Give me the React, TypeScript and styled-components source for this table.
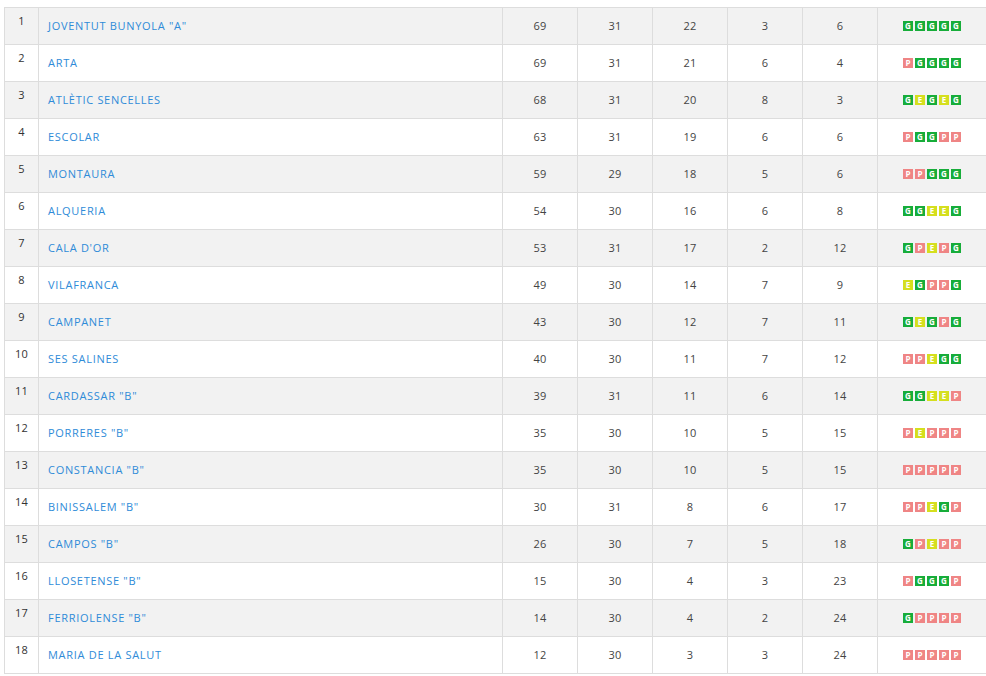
import { createGlobalStyle, styled } from "styled-components";

const GlobalStyle = createGlobalStyle`
  * {
    padding: 0;
    margin: 0;
    box-sizing: border-box;
  }
  body {
    background: #fff;
    font-family: "Open Sans", "Liberation Sans", sans-serif;
  }
`;

const color = {
  border: "#dddddd",
  stripe: "#f2f2f2",
  link: "#2f8bd8",
  text: "#444444",
  win: "#17ad3a",
  draw: "#d5df1e",
  loss: "#ef8585",
};

type Result = "G" | "E" | "P";

interface Team {
  pos: number;
  name: string;
  pts: number;
  pj: number;
  pg: number;
  pe: number;
  pp: number;
  form: string;
}

const teams: Team[] = [
  { pos: 1, name: 'JOVENTUT BUNYOLA "A"', pts: 69, pj: 31, pg: 22, pe: 3, pp: 6, form: "GGGGG" },
  { pos: 2, name: "ARTA", pts: 69, pj: 31, pg: 21, pe: 6, pp: 4, form: "PGGGG" },
  { pos: 3, name: "ATLÈTIC SENCELLES", pts: 68, pj: 31, pg: 20, pe: 8, pp: 3, form: "GEGEG" },
  { pos: 4, name: "ESCOLAR", pts: 63, pj: 31, pg: 19, pe: 6, pp: 6, form: "PGGPP" },
  { pos: 5, name: "MONTAURA", pts: 59, pj: 29, pg: 18, pe: 5, pp: 6, form: "PPGGG" },
  { pos: 6, name: "ALQUERIA", pts: 54, pj: 30, pg: 16, pe: 6, pp: 8, form: "GGEEG" },
  { pos: 7, name: "CALA D'OR", pts: 53, pj: 31, pg: 17, pe: 2, pp: 12, form: "GPEPG" },
  { pos: 8, name: "VILAFRANCA", pts: 49, pj: 30, pg: 14, pe: 7, pp: 9, form: "EGPPG" },
  { pos: 9, name: "CAMPANET", pts: 43, pj: 30, pg: 12, pe: 7, pp: 11, form: "GEGPG" },
  { pos: 10, name: "SES SALINES", pts: 40, pj: 30, pg: 11, pe: 7, pp: 12, form: "PPEGG" },
  { pos: 11, name: 'CARDASSAR "B"', pts: 39, pj: 31, pg: 11, pe: 6, pp: 14, form: "GGEEP" },
  { pos: 12, name: 'PORRERES "B"', pts: 35, pj: 30, pg: 10, pe: 5, pp: 15, form: "PEPPP" },
  { pos: 13, name: 'CONSTANCIA "B"', pts: 35, pj: 30, pg: 10, pe: 5, pp: 15, form: "PPPPP" },
  { pos: 14, name: 'BINISSALEM "B"', pts: 30, pj: 31, pg: 8, pe: 6, pp: 17, form: "PPEGP" },
  { pos: 15, name: 'CAMPOS "B"', pts: 26, pj: 30, pg: 7, pe: 5, pp: 18, form: "GPEPP" },
  { pos: 16, name: 'LLOSETENSE "B"', pts: 15, pj: 30, pg: 4, pe: 3, pp: 23, form: "PGGGP" },
  { pos: 17, name: 'FERRIOLENSE "B"', pts: 14, pj: 30, pg: 4, pe: 2, pp: 24, form: "GPPPP" },
  { pos: 18, name: "MARIA DE LA SALUT", pts: 12, pj: 30, pg: 3, pe: 3, pp: 24, form: "PPPPP" },
];

const columnWidths = [34, 464, 75, 75, 75, 75, 75, 109];

const Wrapper = styled.div`
  padding: 7px 0 0 4px;
`;

const Table = styled.table`
  width: 982px;
  border-collapse: collapse;
  table-layout: fixed;
  font-size: 11px;
  letter-spacing: 0.3px;
  color: ${color.text};
`;

const Col = styled.col<{ $width: number }>`
  width: ${(p) => p.$width}px;
`;

const Row = styled.tr<{ $striped: boolean }>`
  height: 37px;
  background: ${(p) => (p.$striped ? color.stripe : "#fff")};
`;

const Cell = styled.td`
  border: 1px solid ${color.border};
  text-align: center;
  vertical-align: middle;
  padding-bottom: 1px;
`;

const PosCell = styled(Cell)`
  vertical-align: top;
  padding-top: 5px;
  color: #333;
`;

const NameCell = styled(Cell)`
  text-align: left;
  padding-left: 9px;
  letter-spacing: 0.7px;
  color: ${color.link};
`;

const FormRow = styled.div`
  display: flex;
  justify-content: center;
  gap: 2px;
`;

const Badge = styled.span<{ $result: Result }>`
  display: inline-flex;
  align-items: center;
  justify-content: center;
  width: 10px;
  height: 10px;
  font-size: 8px;
  font-weight: 700;
  letter-spacing: 0;
  line-height: 1;
  color: #fff;
  background: ${(p) =>
    p.$result === "G" ? color.win : p.$result === "E" ? color.draw : color.loss};
`;

function App() {
  return (
    <>
      <GlobalStyle />
      <Wrapper>
        <Table>
          <colgroup>
            {columnWidths.map((w, i) => (
              <Col key={i} $width={w} />
            ))}
          </colgroup>
          <tbody>
            {teams.map((t, i) => (
              <Row key={t.pos} $striped={i % 2 === 0}>
                <PosCell>{t.pos}</PosCell>
                <NameCell>{t.name}</NameCell>
                <Cell>{t.pts}</Cell>
                <Cell>{t.pj}</Cell>
                <Cell>{t.pg}</Cell>
                <Cell>{t.pe}</Cell>
                <Cell>{t.pp}</Cell>
                <Cell>
                  <FormRow>
                    {t.form.split("").map((r, j) => (
                      <Badge key={j} $result={r as Result}>
                        {r}
                      </Badge>
                    ))}
                  </FormRow>
                </Cell>
              </Row>
            ))}
          </tbody>
        </Table>
      </Wrapper>
    </>
  );
}

export default App;
